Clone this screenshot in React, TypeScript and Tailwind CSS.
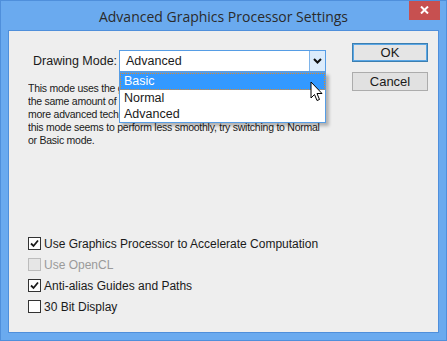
import { useState } from "react";

const Check = ({ checked, disabled }: { checked?: boolean; disabled?: boolean }) => (
  <span
    className={`w-[13px] h-[13px] border flex items-center justify-center ${
      disabled ? "border-[#bcbcbc] bg-[#e6e6e6]" : "border-[#333333] bg-white"
    }`}
  >
    {checked && (
      <svg width="9" height="9" viewBox="0 0 9 9">
        <path d="M1 4.5 L3.5 7 L8 1.5" stroke="#1a1a1a" strokeWidth="1.8" fill="none" />
      </svg>
    )}
  </span>
);

const Cursor = () => (
  <svg width="14" height="22" viewBox="0 0 14 22" className="absolute left-[309px] top-[80px]">
    <path
      d="M1 1 L1 17 L4.5 13.5 L7 19.5 L9.5 18.5 L7 12.5 L12 12.5 Z"
      fill="white"
      stroke="black"
      strokeWidth="1"
      strokeLinejoin="round"
    />
  </svg>
);

export default function App() {
  const [mode] = useState("Advanced");
  const options = [
    { label: "Use Graphics Processor to Accelerate Computation", checked: true },
    { label: "Use OpenCL", disabled: true },
    { label: "Anti-alias Guides and Paths", checked: true },
    { label: "30 Bit Display" },
  ];

  return (
    <div className="relative w-[447px] h-[341px] bg-[#6aaaef] border border-[#4f8fdb] flex flex-col font-['Liberation_Sans',sans-serif] text-[#1a1a1a] overflow-hidden">
      {/* title bar */}
      <div className="relative h-[29px] flex items-center justify-center">
        <span className="text-[14px] text-[#2b2b2b] font-['Open_Sans',sans-serif] mt-[2px]">
          Advanced Graphics Processor Settings
        </span>
        <div className="absolute right-[6px] top-[-1px] w-[31px] h-[20px] bg-[#c75050] flex items-center justify-center">
          <svg width="9" height="8" viewBox="0 0 9 8">
            <path d="M1 0.5 L8 7.5 M8 0.5 L1 7.5" stroke="white" strokeWidth="2" />
          </svg>
        </div>
      </div>

      {/* client area */}
      <div className="relative mx-[7px] mb-[7px] flex-1 bg-[#eeeeee] border border-[#4f8fdb] flex">
        <div className="flex-1 min-w-0 flex flex-col pl-[19px]">
          <div className="flex items-center mt-[19px] h-[22px]">
            <span className="text-[12.5px] ml-[5px] w-[86px] whitespace-nowrap">Drawing Mode:</span>
            <div className="w-[207px] h-[22px] border border-[#569de5] bg-white flex items-center">
              <span className="flex-1 pl-[6px] text-[12.5px]">{mode}</span>
              <div className="w-[16px] h-full bg-[#dcecfc] border-l border-[#7eb4ea] flex items-center justify-center">
                <svg width="9" height="6" viewBox="0 0 9 6">
                  <path d="M1 1 L4.5 4.5 L8 1" stroke="#111" strokeWidth="2" fill="none" />
                </svg>
              </div>
            </div>
          </div>

          <p className="mt-[10px] w-[298px] text-[10.5px] leading-[13px] tracking-[-0.25px] whitespace-nowrap overflow-hidden">
            This mode uses the graphics processor to accelerate drawing, and
            <br />
            the same amount of GPU memory as Normal mode, but enables
            <br />
            more advanced techniques to improve drawing performance. If
            <br />
            this mode seems to perform less smoothly, try switching to Normal
            <br />
            or Basic mode.
          </p>

          <div className="mt-auto mb-[19px] flex flex-col gap-[8px]">
            {options.map((o) => (
              <label key={o.label} className="flex items-center gap-[3px] h-[13px]">
                <Check checked={o.checked} disabled={o.disabled} />
                <span className={`text-[12px] ${o.disabled ? "text-[#9a9a9a]" : "text-[#1a1a1a]"}`}>
                  {o.label}
                </span>
              </label>
            ))}
          </div>
        </div>

        <div className="flex flex-col gap-[10px] pt-[12px] pr-[10px]">
          <button className="w-[76px] h-[19px] border border-[#3c7fb1] bg-[#e5e5e5] text-[13px] leading-none shadow-[inset_0_0_0_1px_#5aa7e6]">
            OK
          </button>
          <button className="w-[76px] h-[19px] border border-[#acacac] bg-[#e1e1e1] text-[13px] leading-none">
            Cancel
          </button>
        </div>

        {/* open dropdown list */}
        <div className="absolute left-[110px] top-[41px] w-[207px] bg-white border border-[#569de5] shadow-[3px_3px_3px_rgba(0,0,0,0.25)] text-[12.5px]">
          <div className="h-[17px] bg-[#3399ff] text-white pl-[4px] leading-[17px] outline outline-1 outline-dotted outline-[#e08a2c] outline-offset-[-1px]">
            Basic
          </div>
          <div className="h-[16px] pl-[4px] leading-[16px]">Normal</div>
          <div className="h-[16px] pl-[4px] leading-[16px]">Advanced</div>
        </div>
      </div>

      <Cursor />
    </div>
  );
}
